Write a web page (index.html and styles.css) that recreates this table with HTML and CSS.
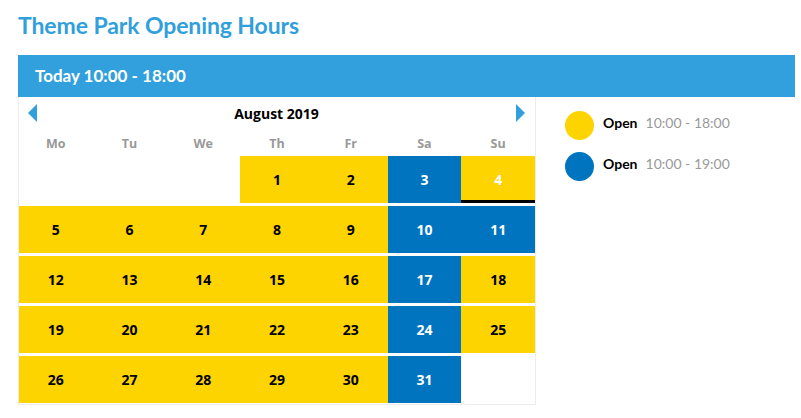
FILE: index.html
```html
<!DOCTYPE html>
<html>
<head>
<meta charset="utf-8">
<link rel="stylesheet" href="styles.css">
</head>
<body>
<div class="page">
  <h1 class="title">Theme Park Opening Hours</h1>
  <div class="today-bar">Today 10:00 - 18:00</div>
  <div class="content">
    <div class="calendar">
      <div class="cal-nav">
        <span class="arrow arrow-left"></span>
        <span class="month">August 2019</span>
        <span class="arrow arrow-right"></span>
      </div>
      <div class="weekdays">
        <span>Mo</span><span>Tu</span><span>We</span><span>Th</span><span>Fr</span><span>Sa</span><span>Su</span>
      </div>
      <div class="days">
        <span class="day empty"></span>
        <span class="day empty"></span>
        <span class="day empty"></span>
        <span class="day y">1</span>
        <span class="day y">2</span>
        <span class="day b">3</span>
        <span class="day y today">4</span>

        <span class="day y">5</span>
        <span class="day y">6</span>
        <span class="day y">7</span>
        <span class="day y">8</span>
        <span class="day y">9</span>
        <span class="day b">10</span>
        <span class="day b">11</span>

        <span class="day y">12</span>
        <span class="day y">13</span>
        <span class="day y">14</span>
        <span class="day y">15</span>
        <span class="day y">16</span>
        <span class="day b">17</span>
        <span class="day y">18</span>

        <span class="day y">19</span>
        <span class="day y">20</span>
        <span class="day y">21</span>
        <span class="day y">22</span>
        <span class="day y">23</span>
        <span class="day b">24</span>
        <span class="day y">25</span>

        <span class="day y">26</span>
        <span class="day y">27</span>
        <span class="day y">28</span>
        <span class="day y">29</span>
        <span class="day y">30</span>
        <span class="day b">31</span>
        <span class="day empty"></span>
      </div>
    </div>
    <div class="legend">
      <div class="legend-item">
        <span class="dot dot-y"></span>
        <span class="legend-label">Open</span>
        <span class="legend-time">10:00 - 18:00</span>
      </div>
      <div class="legend-item">
        <span class="dot dot-b"></span>
        <span class="legend-label">Open</span>
        <span class="legend-time">10:00 - 19:00</span>
      </div>
    </div>
  </div>
</div>
</body>
</html>
```

FILE: styles.css
```css
* { box-sizing: border-box; }
html, body { margin: 0; padding: 0; background: #fff; }
body { font-family: Lato, "Open Sans", sans-serif; }

.page {
  width: 777px;
  margin-left: 18px;
}

.title {
  margin: 0;
  padding-top: 10px;
  height: 55px;
  font-family: Lato, sans-serif;
  font-weight: 700;
  font-size: 23px;
  line-height: 30px;
  color: #319fdc;
  letter-spacing: -0.1px;
}

.today-bar {
  height: 42px;
  background: #31a0dc;
  color: #fff;
  font-family: Lato, sans-serif;
  font-weight: 700;
  font-size: 17px;
  line-height: 42px;
  padding-left: 17px;
}

.content {
  display: flex;
  align-items: flex-start;
}

.calendar {
  width: 518px;
  border: 1px solid #ececec;
  border-top: none;
  padding-bottom: 1px;
  font-family: "Open Sans", sans-serif;
}

.cal-nav {
  height: 34px;
  display: flex;
  align-items: center;
  justify-content: space-between;
  padding: 0 10px 2px 9px;
}

.month {
  font-weight: 700;
  font-size: 14px;
  color: #000;
}

.arrow {
  width: 0;
  height: 0;
  border-top: 9px solid transparent;
  border-bottom: 9px solid transparent;
}
.arrow-left { border-right: 9px solid #319fdc; }
.arrow-right { border-left: 9px solid #319fdc; }

.weekdays {
  display: grid;
  grid-template-columns: repeat(7, 1fr);
  height: 25px;
  align-items: center;
  text-align: center;
  font-weight: 700;
  font-size: 12.5px;
  color: #999;
  padding-bottom: 1px;
}

.days {
  display: grid;
  grid-template-columns: repeat(7, 1fr);
  grid-auto-rows: 47px;
  row-gap: 3px;
}

.day {
  display: flex;
  align-items: center;
  justify-content: center;
  font-weight: 700;
  font-size: 14px;
  color: #000;
}
.day.y { background: #fdd300; }
.day.b { background: #0074bf; color: #fff; }
.day.today { color: #fff; border-bottom: 3px solid #000; padding-top: 3px; }

.legend {
  margin-left: 29px;
  padding-top: 14px;
  display: flex;
  flex-direction: column;
  gap: 12px;
}

.legend-item {
  display: flex;
  align-items: center;
  height: 29px;
}

.dot {
  width: 29px;
  height: 29px;
  border-radius: 50%;
  margin-right: 9px;
}
.dot-y { background: #fdd300; }
.dot-b { background: #0074bf; }

.legend-label {
  font-family: Lato, sans-serif;
  font-weight: 700;
  font-size: 14px;
  color: #000;
  margin-right: 8px;
  margin-top: -6px;
}

.legend-time {
  font-family: Lato, sans-serif;
  font-size: 14px;
  color: #999;
  margin-top: -6px;
}
```
